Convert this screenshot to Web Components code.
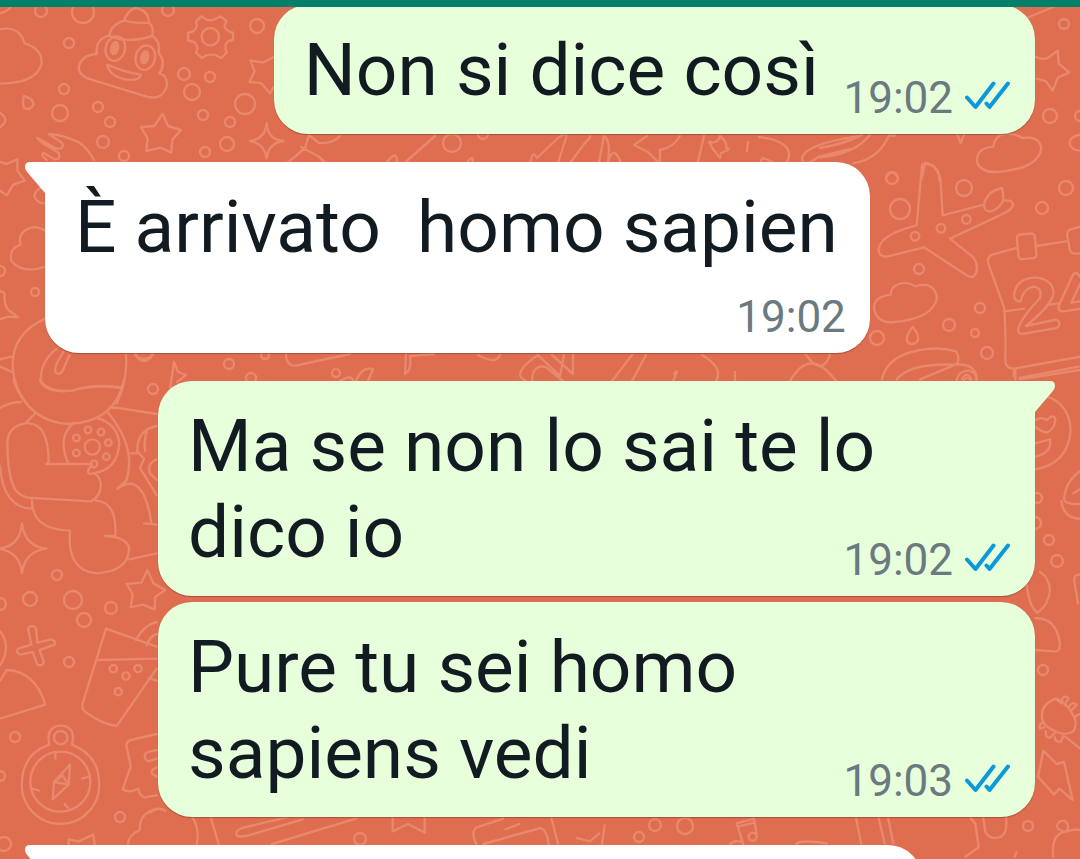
<!DOCTYPE html>
<html lang="it">
<head>
<meta charset="utf-8">
<meta name="viewport" content="width=device-width, initial-scale=1">
<title>Chat</title>
<style>
  body {
    margin: 0;
    height: 100vh;
    overflow: hidden;
    background: #df6d50;
    font-family: Roboto, sans-serif;
    color: #111b21;
  }
</style>
</head>
<body>
<chat-screen>
  <chat-message side="out">Non si dice così<span slot="time">19:02</span></chat-message>
  <chat-message side="in" tail stacked>È arrivato  homo sapien<span slot="time">19:02</span></chat-message>
  <chat-message side="out" tail>Ma se non lo sai te lo dico io<span slot="time">19:02</span></chat-message>
  <chat-message side="out" grouped>Pure tu sei homo sapiens vedi<span slot="time">19:03</span></chat-message>
  <chat-message side="in" tail wide></chat-message>
</chat-screen>

<script>
class ChatWallpaper extends HTMLElement {
  constructor() {
    super();
    this.attachShadow({ mode: 'open' });
  }

  connectedCallback() {
    // Loose bubbles scattered between the doodles: x, y, radius
    const dots = [
      [41, 11, 6], [83, 12, 11], [168, 10, 6], [69, 43, 5], [64, 89, 5], [60, 113, 8],
      [98, 107, 5], [110, 122, 5], [103, 142, 6], [124, 156, 5], [184, 74, 6], [210, 77, 5],
      [192, 92, 8], [257, 26, 7], [245, 104, 10], [203, 115, 5], [230, 122, 5], [227, 144, 7],
      [205, 152, 5], [1064, 24, 5], [1050, 116, 7], [1080, 116, 5], [892, 178, 6],
      [900, 209, 10], [964, 188, 8], [1066, 188, 7], [1042, 208, 6], [919, 269, 5],
      [877, 338, 7], [949, 325, 6], [980, 308, 5], [975, 333, 4], [987, 353, 6],
      [35, 292, 4], [0, 271, 5], [144, 353, 8], [153, 389, 5], [57, 575, 5], [30, 599, 7],
      [73, 600, 9], [111, 608, 6], [0, 604, 6], [84, 620, 7], [69, 662, 5], [15, 737, 5],
      [0, 776, 5], [120, 817, 5], [4, 844, 7], [1037, 498, 5], [1035, 523, 6], [1049, 540, 5],
      [1057, 561, 6], [1043, 670, 5], [1028, 826, 5], [360, 839, 6], [655, 825, 6],
      [639, 837, 5], [685, 826, 8], [452, 143, 9], [483, 134, 5], [229, 364, 5],
      [265, 355, 4], [336, 373, 4], [251, 378, 5], [893, 133, 3]
    ];

    this.shadowRoot.innerHTML = `
      <style>
        :host {
          position: absolute;
          inset: 0;
          z-index: -1;
          overflow: hidden;
          background: #df6d50;
        }
        svg {
          display: block;
          width: 1080px;
          height: 859px;
          fill: none;
          stroke: #e8886c;
          stroke-width: 2.4;
          stroke-linecap: round;
          stroke-linejoin: round;
        }
        .fine { stroke-width: 7.2; }
      </style>
      <svg viewBox="0 0 1080 859" aria-hidden="true">
        <g>${dots.map(([x, y, r]) => `<circle cx="${x}" cy="${y}" r="${r}"/>`).join('')}</g>

        <!-- cloud, smiling swirl, gear, stars, hand -->
        <g class="fine" transform="scale(.33333)">
          <path d="M0 88Q58 76 74 130Q126 145 125 190Q112 250 0 251"/>
          <path d="M0 40Q20 36 32 22M0 338Q32 360 0 382M72 288Q66 310 72 323Q90 334 101 314Q100 296 72 288Z"/>
          <path d="M372 62Q382 32 405 24Q446 30 447 68Q410 72 372 62Q330 76 328 107M328 107Q286 116 290 162Q240 166 236 205Q236 222 262 235L440 290Q490 302 501 255Q502 225 478 220M447 68Q464 84 456 108Q380 132 328 107M456 108Q482 120 476 160Q500 188 478 220"/>
          <ellipse cx="346" cy="146" rx="29" ry="37" transform="rotate(14 346 146)"/>
          <ellipse cx="436" cy="173" rx="29" ry="37" transform="rotate(14 436 173)"/>
          <ellipse cx="344" cy="144" rx="10" ry="18" fill="#e8886c" transform="rotate(14 344 144)"/>
          <ellipse cx="434" cy="172" rx="10" ry="18" fill="#e8886c" transform="rotate(14 434 172)"/>
          <path d="M322 194Q370 216 422 224Q420 244 374 238Q326 226 322 194Z"/>
          <circle cx="631" cy="110" r="26"/>
          <path d="M604 49L618 58Q632 64 646 57L663 49L680 64L673 79Q679 92 690 96L699 98V120L686 123Q675 130 676 145L680 158L664 174L648 166Q635 162 620 166L606 174L588 158L592 145Q590 130 579 125L564 121V99L577 95Q590 88 591 74L588 64Z"/>
          <path d="M820 172L788 188L751 181L764 214L748 246L783 249L810 280L820 262"/>
          <path d="M488 341L504 378L543 390L517 419L514 458L481 443L439 453L443 415L423 381L463 378Z"/>
          <path d="M800 370Q803 418 850 423Q805 430 800 475Q794 430 750 423Q796 416 800 370Z"/>
          <path d="M112 414L162 442Q182 452 188 440Q192 430 174 420L146 402Q190 404 238 428Q264 446 282 480M112 414L132 432L176 458Q184 480 164 478L130 458Q120 466 140 480"/>
          <path d="M0 486L20 492L52 478V512L74 542L40 554L20 586L0 572M136 560Q104 566 103 590Q112 610 136 610"/>
        </g>

        <!-- star, cloud and bands, top right -->
        <g class="fine" transform="translate(820 0) scale(.33333)">
          <path d="M645 170Q670 182 684 173L713 152L716 190L748 218L714 232L698 272L678 244L650 236M620 54L702 20"/>
          <path d="M520 440Q468 444 471 486Q484 524 550 514Q654 502 664 446Q660 406 606 414Q580 396 544 404Q522 416 520 440ZM780 404Q746 410 749 432Q754 450 780 452"/>
          <path d="M0 444Q76 432 126 404M0 472Q106 462 150 404M100 490Q178 476 208 404M412 404L422 430L432 404M304 540L316 488Q360 500 358 540M200 530Q214 504 234 532"/>
        </g>

        <!-- aeroplane, clouds, calendar -->
        <g class="fine" transform="translate(860 130) scale(.33333)">
          <path d="M188 102Q232 96 242 154L248 256L372 224Q380 184 426 174Q430 190 430 212Q456 208 460 224Q456 240 424 254L270 326L340 382Q356 404 348 430Q340 448 320 436L192 352L80 380Q54 380 56 356Q64 312 170 286L186 106ZM372 224Q372 246 392 244Q414 240 430 212"/>
          <circle cx="165" cy="319" r="13"/><circle cx="243" cy="295" r="13"/><circle cx="319" cy="268" r="13"/>
          <path d="M92 494Q40 500 42 536Q52 582 104 576Q222 564 231 502Q220 452 166 469Q136 450 108 466Q92 474 92 494ZM158 590Q136 616 142 636Q158 650 174 632Q178 614 158 590Z"/>
          <path d="M66 748Q78 688 154 666Q230 646 288 664Q304 690 286 704Q206 738 180 748M110 748Q150 698 286 704Q350 700 350 748M306 748Q320 720 334 748"/>
          <path d="M470 354L396 374Q378 384 386 404L432 532Q438 590 436 696Q440 716 462 716L660 680M432 544L492 536M466 716V748M480 748L660 720M530 348L618 334"/>
          <rect x="473" y="312" width="54" height="74" rx="10" transform="rotate(-5 500 349)"/>
          <path d="M660 290L632 298Q620 302 622 318L630 362Q634 374 660 370"/>
          <path d="M482 514Q464 516 462 496Q468 446 524 442Q584 448 580 494Q570 530 498 588L582 570Q600 568 598 584Q594 596 580 596L486 612Q470 610 476 592Q484 564 540 504Q548 472 520 470Q490 476 482 514ZM660 440Q646 418 636 440L596 528Q594 546 612 544L660 536M568 524L594 520"/>
          <path d="M660 462L634 518L660 514"/>
        </g>

        <!-- astronaut -->
        <g class="fine" transform="translate(0 150) scale(.33333)">
          <path d="M136 242Q96 218 66 250Q56 264 62 284Q26 296 34 332Q68 374 136 350M0 422L14 430Q10 470 30 484L54 502L24 500L0 508"/>
          <path d="M136 506Q36 550 38 650Q42 716 80 760M170 596Q116 640 124 698Q140 728 216 722Q280 700 364 712M378 614Q384 690 350 760M208 616L190 658Q180 680 166 666Q164 650 176 630L190 606M34 620L0 628M36 666L0 650M404 614Q432 640 460 614"/>
        </g>
        <g class="fine" transform="translate(0 380) scale(.33333)">
          <path d="M40 0Q86 126 206 132Q346 126 372 0M120 0Q146 40 216 32Q280 12 364 24M0 84Q30 66 62 66M330 80L470 102M104 102L76 130Q20 140 22 194Q24 300 48 332Q66 354 100 354L272 364Q304 350 302 310Q298 284 280 280Q260 286 266 268L276 252H138L146 248Q146 130 84 130M0 258Q10 384 96 386M96 354Q92 450 210 452Q200 574 290 580Q390 572 387 502Q376 470 316 468H346Q352 366 288 362M322 96Q410 200 380 300L352 326Q430 270 454 428M388 538L470 520M432 430L470 434"/>
          <path d="M204 250Q170 170 222 128M292 114Q350 130 358 188Q354 270 280 280"/>
          <circle cx="277" cy="201" r="23"/>
          <circle cx="264" cy="150" r="10"/><circle cx="303" cy="156" r="10"/><circle cx="325" cy="188" r="10"/>
          <circle cx="319" cy="230" r="10"/><circle cx="282" cy="252" r="10"/><circle cx="229" cy="219" r="10"/><circle cx="229" cy="174" r="10"/>
          <path d="M470 138Q410 150 412 214L432 236L420 264L446 306L470 346M440 154Q430 190 436 214M388 220H410M470 238Q440 250 450 280L470 300"/>
          <path d="M66 430Q74 500 140 506Q74 514 66 580Q60 514 -6 506Q60 500 66 430Z"/>
          <path d="M442 570L460 610L496 630L466 650L464 688L428 674L392 682L398 642L380 612L424 608Z"/>
        </g>

        <!-- plus, cup, compass, ghost -->
        <g class="fine" transform="translate(0 600) scale(.33333)">
          <path d="M84 84Q96 72 108 84L112 128L154 118Q168 122 164 134L118 150L132 186Q126 200 112 194L98 156L60 164Q46 158 54 146L94 134Z"/>
          <path d="M0 94Q36 140 0 196M0 242L20 210Q106 214 136 314L0 356"/>
          <path d="M318 86L470 140M318 86L248 310Q244 326 256 336Q310 374 350 378L470 206M290 180L470 176M408 120Q430 76 470 66M440 136Q448 110 470 102M446 234L470 242"/>
          <circle cx="340" cy="206" r="11"/><circle cx="378" cy="228" r="11"/><circle cx="414" cy="206" r="11"/><circle cx="355" cy="275" r="11"/>
          <circle cx="181" cy="545" r="90"/>
          <circle cx="182" cy="413" r="20"/>
          <path d="M148 434Q136 380 182 376Q230 380 216 434Q296 466 297 545A116 116 0 1 1 66 545Q70 460 148 434ZM166 462V476M246 536L266 530M96 566L118 572M194 612L204 624M210 494L162 546L158 598L206 554ZM162 546L206 554M166 544L188 526L200 546"/>
          <path d="M470 402L392 420Q374 426 382 450L392 500L368 568Q390 580 414 566Q424 600 446 590L470 586M470 450L438 458Q428 476 444 484L470 476M470 502Q440 514 470 530M470 626Q416 640 420 690Q384 704 384 734M206 734V718L236 724L280 704L284 734"/>
        </g>

        <!-- winking face, cap and bolt down the right edge -->
        <g class="fine" transform="translate(940 370) scale(.33333)">
          <path d="M322 80Q390 104 392 184Q382 282 286 298M286 150Q304 140 320 150Q344 128 346 150Q344 178 320 188Q300 184 286 170M286 220L330 208Q336 250 286 260M420 304Q376 334 372 390Q380 404 420 402M364 394Q372 446 420 446M400 370L420 358M420 614Q398 612 404 640L414 700M50 30Q58 0 88 2Q112 10 108 30M72 30Q84 16 92 30M222 0V20M238 24L416 -10"/>
        </g>
        <g class="fine" transform="translate(940 590) scale(.33333)">
          <path d="M274 -60Q256 -34 262 0Q270 52 292 68Q326 46 330 0Q326 -40 300 -54M286 84Q350 84 360 162Q360 186 344 184L286 180M306 376Q304 344 346 326Q376 330 404 384Q412 404 400 424Q370 444 324 412Q304 396 306 376ZM346 326L364 340M366 330Q368 314 386 324L374 344M386 354Q394 332 410 344L394 362M404 380L420 372M312 396Q294 402 300 416L312 412M318 424Q314 440 330 444L344 428M344 440Q344 456 362 456L370 438M376 440L420 476"/>
          <path d="M310 482L350 522L372 516L398 630L358 596L342 614L294 560ZM92 684L106 702L116 772L76 800M130 684L136 726Q150 752 184 740Q204 724 198 684M224 800L230 786M340 800Q332 730 380 724Q404 716 420 720M350 710Q354 690 374 692Q390 704 380 724Q360 726 350 710Z"/>
        </g>

        <!-- strips that show between the messages -->
        <g class="fine" transform="translate(150 800) scale(.33333)">
          <path d="M0 38Q24 18 46 32M128 52Q150 90 140 134M182 52L206 132M410 52L276 84Q252 94 262 108Q274 112 296 106L458 58M366 132L618 56M728 54V94L774 72L824 98V54M980 134Q960 96 980 82L1060 56M1000 132L1172 84Q1192 92 1196 132M1066 88L1108 72M1204 54L1224 130M1280 114L1320 124L1348 100M1356 132L1364 76"/>
          <path d="M1780 134L1760 70L1812 56L1820 100M1764 80L1812 68M1740 132Q1756 118 1772 126"/><circle cx="1808" cy="110" r="12"/>
          <path d="M1938 132Q1950 118 2030 130M2118 54L2134 132M2186 54L2204 130M2214 54L2230 130"/>
        </g>
        <path d="M309 135L305 148L285 165M309 135L319 143Q333 144 340 136M301 147L318 156L329 166M384 166Q398 146 397 164M401 166L435 136M465 166Q475 150 472 166M497 166Q501 160 504 166M530 166Q532 148 537 158L558 138Q571 128 564 144L557 166M568 166L584 144Q592 136 590 136M599 162L604 136Q611 140 608 162Q614 142 622 166M680 136Q673 148 660 150V164L648 152L634 145L647 136M697 166L704 136M720 136Q728 143 726 148Q733 149 721 153L720 158L713 149L709 142Q718 144 720 136M748 142L747 151M759 137Q800 142 785 166M763 158Q779 164 775 166Q756 164 763 158M860 136Q805 144 802 158Q803 169 818 157L850 149"/>
        <path d="M170 390L174 362L178 372L186 375L177 382M286 354Q286 370 303 364L350 354M340 381Q352 374 353 381M356 381Q362 366 373 369L368 381M406 354L405 374Q412 370 410 356L434 354M478 355Q496 365 500 355M538 355Q510 374 526 381M532 381Q532 364 546 367L563 381M538 355L560 376L564 355M552 355L573 374V355M612 381L632 355M632 381L646 355M702 355Q724 368 716 381M673 381Q680 366 674 374M735 372V380M806 355Q822 377 830 355M790 381Q810 346 836 381"/>
      </svg>
    `;
  }
}

class MessageTicks extends HTMLElement {
  constructor() {
    super();
    this.attachShadow({ mode: 'open' });
    this.shadowRoot.innerHTML = `
      <style>
        :host { display: block; flex: none; }
        svg {
          display: block;
          fill: none;
          stroke: #0c99da;
          stroke-width: 4;
          stroke-linecap: round;
          stroke-linejoin: round;
        }
      </style>
      <svg width="46" height="34" viewBox="0 0 46 34" role="img" aria-label="Letto">
        <path d="M3 16.5L11.5 26L29.5 2.5"/>
        <path d="M22.5 22.5L25.5 26L44 2.5"/>
      </svg>
    `;
  }
}

class ChatMessage extends HTMLElement {
  constructor() {
    super();
    this.attachShadow({ mode: 'open' });
  }

  connectedCallback() {
    const out = this.getAttribute('side') === 'out';

    this.shadowRoot.innerHTML = `
      <style>
        :host {
          display: flex;
          margin-bottom: 28px;
          --bubble: #ffffff;
        }
        :host([side="out"]) {
          justify-content: flex-end;
          --bubble: #e7ffdb;
        }
        :host([grouped]) { margin-top: -22px; }

        .bubble {
          position: relative;
          box-sizing: border-box;
          max-width: calc(100% - 113px);
          min-height: 129px;
          padding: 22px 32px 21px 30px;
          border-radius: 34px;
          background: var(--bubble);
          box-shadow: 0 1px 1px rgba(60, 30, 15, 0.35);
        }
        :host([wide]) .bubble { width: 100%; }
        :host([tail][side="in"]) .bubble { border-top-left-radius: 0; }
        :host([tail][side="out"]) .bubble { border-top-right-radius: 0; }

        .text {
          font-size: 73px;
          line-height: 86px;
          white-space: pre-wrap;
        }
        /* keeps the last line clear of the time */
        .spacer {
          display: inline-block;
          width: 184px;
          height: 1px;
        }
        .meta {
          position: absolute;
          right: 25px;
          bottom: 14px;
          display: flex;
          align-items: center;
          gap: 11px;
          font-size: 44px;
          line-height: 44px;
          color: #6a7a80;
        }

        :host([stacked]) .bubble { padding-bottom: 14px; }
        :host([stacked]) .spacer { display: none; }
        :host([stacked]) .meta {
          position: static;
          justify-content: flex-end;
          margin: 25px -8px 0 0;
        }

        .tail {
          display: none;
          position: absolute;
          top: 0;
          left: -20px;
          fill: var(--bubble);
        }
        :host([tail]) .tail { display: block; }
        :host([side="out"]) .tail {
          left: auto;
          right: -20px;
          transform: scaleX(-1);
        }
      </style>
      <div class="bubble">
        <svg class="tail" width="22" height="34" viewBox="0 0 22 34" aria-hidden="true">
          <path d="M22 0H5Q0 0 0 5Q0 8 3 11L20 31H22Z"/>
        </svg>
        <div class="text"><slot></slot><span class="spacer"></span></div>
        <div class="meta"><slot name="time"></slot>${out ? '<message-ticks></message-ticks>' : ''}</div>
      </div>
    `;
  }
}

class ChatScreen extends HTMLElement {
  constructor() {
    super();
    this.attachShadow({ mode: 'open' });
    this.shadowRoot.innerHTML = `
      <style>
        :host {
          display: block;
          position: relative;
          z-index: 0;
          height: 100%;
          overflow: hidden;
        }
        header {
          position: relative;
          z-index: 1;
          height: 7px;
          background: #008069;
        }
        main {
          margin-top: -2px;
          padding: 0 45px;
        }
      </style>
      <chat-wallpaper></chat-wallpaper>
      <header></header>
      <main><slot></slot></main>
    `;
  }
}

customElements.define('chat-wallpaper', ChatWallpaper);
customElements.define('message-ticks', MessageTicks);
customElements.define('chat-message', ChatMessage);
customElements.define('chat-screen', ChatScreen);
</script>
</body>
</html>
